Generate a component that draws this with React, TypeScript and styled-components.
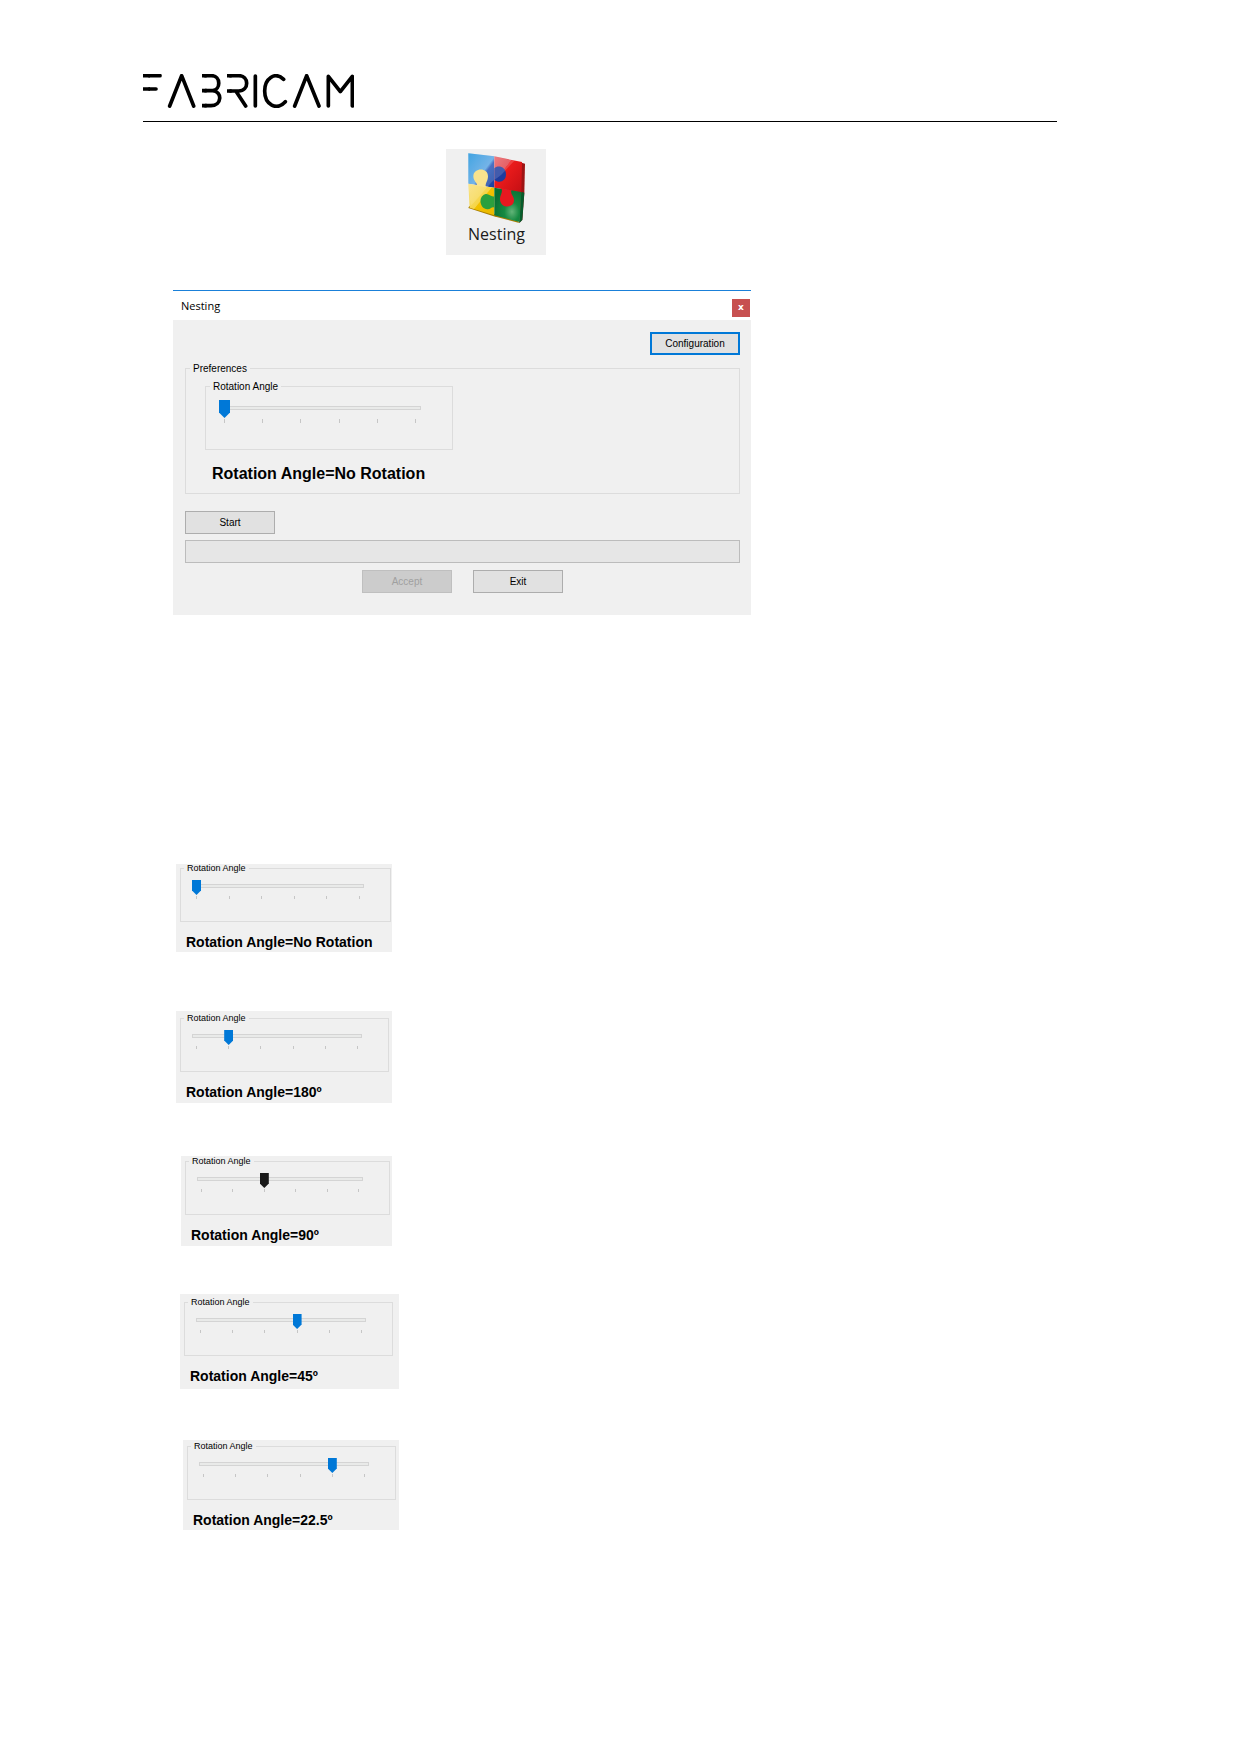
import React, { useId, useState } from "react";
import styled, { createGlobalStyle } from "styled-components";

const GlobalStyle = createGlobalStyle`
  *, *::before, *::after { box-sizing: border-box; }
  body { margin: 0; background: #fff; color: #000; font-family: "Liberation Sans", Arial, sans-serif; }
`;

const uiFont = `"Liberation Sans", Arial, sans-serif`;
const titleFont = `"Open Sans", "Noto Sans", sans-serif`;

const Page = styled.main`
  padding: 74px 183px 64px 143px;
`;

const Header = styled.header`
  display: flex;
  padding-bottom: 13px;
  border-bottom: 1px solid #000;
`;

const ToolButton = styled.button`
  display: flex;
  flex-direction: column;
  align-items: center;
  width: 100px;
  height: 106px;
  margin: 27px 0 0 303px;
  padding: 4px 0 0 1px;
  border: 0;
  background: #f0f0f0;
  color: #1a1a1a;
  font: 16px/22px ${titleFont};
`;

const Dialog = styled.section`
  max-width: 578px;
  margin: 35px 0 0 30px;
  border-top: 1px solid #1a80d9;
  background: #f0f0f0;
`;

const TitleBar = styled.div`
  display: flex;
  align-items: center;
  justify-content: space-between;
  height: 29px;
  padding: 0 1px 0 8px;
  background: #fff;
`;

const Title = styled.h1`
  margin: 0;
  font: 11px/16px ${titleFont};
`;

const CloseButton = styled.button`
  width: 18px;
  height: 18px;
  margin-top: 4px;
  padding: 0 0 2px;
  border: 0;
  background: #c75050;
  color: #fff;
  font: bold 9px/16px "DejaVu Sans", sans-serif;
`;

const DialogBody = styled.div`
  display: flex;
  flex-direction: column;
  padding: 12px 11px 22px 12px;
`;

const PushButton = styled.button<{ $focused?: boolean }>`
  width: 90px;
  height: 23px;
  padding: 0;
  border: ${(p) => (p.$focused ? "2px solid #0078d7" : "1px solid #adadad")};
  background: #e1e1e1;
  color: #000;
  font: 10px/16px ${uiFont};

  &:disabled {
    border-color: #bfbfbf;
    background: #ccc;
    color: #a0a0a0;
  }
`;

const ButtonRow = styled.div<{ $align: string; $before: number }>`
  display: flex;
  justify-content: ${(p) => p.$align};
  gap: 21px;
  margin-top: ${(p) => p.$before}px;
`;

const Progress = styled.progress`
  appearance: none;
  display: block;
  width: 100%;
  height: 23px;
  margin-top: 6px;
  border: 1px solid #bcbcbc;
  background: #e6e6e6;

  &::-webkit-progress-bar { background: #e6e6e6; }
  &::-webkit-progress-value { background: #06b025; }
`;

const Group = styled.fieldset<{ $width?: number; $before?: number }>`
  min-width: 0;
  width: ${(p) => (p.$width ? `${p.$width}px` : "auto")};
  max-width: 100%;
  margin: ${(p) => p.$before ?? 0}px 0 0;
  padding: 0;
  border: 1px solid #dcdcdc;
`;

const Legend = styled.legend<{ $small?: boolean }>`
  margin-left: ${(p) => (p.$small ? 3 : 4)}px;
  padding: 0 3px;
  font: ${(p) => (p.$small ? "9px/9px" : "10px/13px")} ${uiFont};
`;

const Preferences = styled.div`
  padding: 5px 19px 9px;
`;

const SliderArea = styled.div<{ $small?: boolean }>`
  padding: ${(p) => (p.$small ? "7px 26px 22px 11px" : "7px 31px 26px 13px")};
`;

const Range = styled.input<{ $small?: boolean; $color: string }>`
  appearance: none;
  display: block;
  width: 100%;
  height: ${(p) => (p.$small ? 15 : 18)}px;
  margin: 0;
  background:
    linear-gradient(#e9eae9, #e9eae9) center ${(p) => (p.$small ? 5 : 7)}px / calc(100% - 2px) 2px no-repeat,
    linear-gradient(#d4d4d4, #d4d4d4) 0 ${(p) => (p.$small ? 4 : 6)}px / 100% 4px no-repeat;

  &::-webkit-slider-runnable-track { height: 100%; }

  &::-webkit-slider-thumb {
    appearance: none;
    width: ${(p) => (p.$small ? 9 : 11)}px;
    height: 100%;
    border: 0;
    background: ${(p) => p.$color};
    clip-path: polygon(0 0, 100% 0, 100% 70%, 50% 100%, 0 70%);
  }
`;

const Ticks = styled.div<{ $small?: boolean }>`
  display: flex;
  justify-content: space-between;
  height: ${(p) => (p.$small ? 3 : 4)}px;
  margin: 1px ${(p) => (p.$small ? 4 : 5)}px 0;
`;

const Tick = styled.span`
  width: 1px;
  background: #c6c6c6;
`;

const Caption = styled.output<{ $small?: boolean }>`
  display: block;
  padding-left: ${(p) => (p.$small ? 6 : 7)}px;
  margin-top: ${(p) => (p.$small ? 12 : 14)}px;
  font-weight: bold;
  font-size: ${(p) => (p.$small ? 14 : 16)}px;
  line-height: ${(p) => (p.$small ? 16 : 20)}px;
  white-space: nowrap;
`;

const Examples = styled.div`
  padding-top: 249px;
`;

const Example = styled.section<{ $left: number; $before: number; $width: number; $height: number; $top: number }>`
  width: ${(p) => p.$width}px;
  max-width: 100%;
  min-height: ${(p) => p.$height}px;
  margin: ${(p) => p.$before}px 0 0 ${(p) => p.$left}px;
  padding: ${(p) => p.$top}px 0 0 4px;
  background: #f0f0f0;
`;

const angles = ["No Rotation", "180º", "90º", "45º", "22.5º", "11.25º"];

function AngleControl({ start, width, small, color = "#0078d7" }: {
  start: number; width: number; small?: boolean; color?: string;
}) {
  const id = useId();
  const [step, setStep] = useState(start);
  return (
    <>
      <Group $width={width}>
        <Legend $small={small}><label htmlFor={id}>Rotation Angle</label></Legend>
        <SliderArea $small={small}>
          <Range
            id={id}
            type="range"
            min={0}
            max={5}
            value={step}
            onChange={(e) => setStep(Number(e.target.value))}
            $small={small}
            $color={color}
          />
          <Ticks $small={small} aria-hidden="true">
            {angles.map((a) => <Tick key={a} />)}
          </Ticks>
        </SliderArea>
      </Group>
      <Caption htmlFor={id} $small={small}>Rotation Angle={angles[step]}</Caption>
    </>
  );
}

function Logo() {
  return (
    <svg width="211" height="34" viewBox="39 42 633 102" fill="none" stroke="#000" strokeWidth="11"
      strokeLinejoin="round" role="img" aria-label="Fabricam">
      <path d="M39 47H60M39 87H60M216 47H230M216 92H230M216 137H230M291 47H305M291 93H305" />
      <g strokeLinecap="round">
        <path d="M58 47H90M58 87H78" />
        <path d="M119 138L155 47L191 138" />
        <path d="M226 47H244C274 47 272 90 248 92H226M248 92C278 94 276 137 243 137H226" />
        <path d="M301 47H326C358 47 358 93 326 93H301M319 95L347 138" />
        <path d="M376 48V138" />
        <path d="M461 58C434 33 404 56 404 93C404 134 440 154 466 125" />
        <path d="M494 138L530 47L567 138" />
        <path d="M595 138V49L631 95L667 49V138" />
      </g>
    </svg>
  );
}

function PuzzleIcon() {
  return (
    <svg width="57" height="70" viewBox="86 38 171 210" aria-hidden="true">
      <defs>
        <linearGradient id="pzBlue" x1="0" y1="0" x2="1" y2="1">
          <stop offset="0" stopColor="#1f93dc" /><stop offset="0.55" stopColor="#5aa6e4" />
          <stop offset="0.62" stopColor="#2456b8" /><stop offset="1" stopColor="#1b3f9c" />
        </linearGradient>
        <linearGradient id="pzRed" x1="0" y1="0" x2="1" y2="1">
          <stop offset="0" stopColor="#e8646a" /><stop offset="0.35" stopColor="#e0444a" />
          <stop offset="0.36" stopColor="#ee1c1c" /><stop offset="1" stopColor="#c40f14" />
        </linearGradient>
        <linearGradient id="pzYellow" x1="0" y1="0" x2="1" y2="1">
          <stop offset="0" stopColor="#f8e07a" /><stop offset="0.5" stopColor="#f6d548" />
          <stop offset="0.52" stopColor="#f2c100" /><stop offset="1" stopColor="#e8b800" />
        </linearGradient>
        <radialGradient id="pzGreen" cx="0.65" cy="0.7" r="0.7">
          <stop offset="0" stopColor="#62b478" /><stop offset="0.4" stopColor="#168a42" />
          <stop offset="1" stopColor="#087034" />
        </radialGradient>
      </defs>
      <path d="M242 66L257 70L255 158L249 238L240 248Z" fill="#9e1414" />
      <path d="M246 154L255 157L249 239L240 248Z" fill="#075c2c" />
      <path d="M87 203L163 228L240 248L236 243L164 220L90 197Z" fill="#a67c00" />
      <path d="M87 39L165 48V142L87 130Z" fill="url(#pzBlue)" />
      <path d="M165 48L248 65L246 157L165 142Z" fill="url(#pzRed)" />
      <path d="M87 130L165 142V225L91 202Z" fill="url(#pzYellow)" />
      <path d="M165 142L246 155L241 245L165 225Z" fill="url(#pzGreen)" />
      <path d="M165 84C176 73 200 80 200 102C200 124 178 130 165 118Z" fill="#1e3c9e" />
      <path d="M112 136C116 128 102 124 102 108C102 82 146 80 146 108C146 124 136 130 140 141Z" fill="#f8de78" />
      <path d="M186 144C192 156 181 164 182 178C185 206 224 204 224 180C224 166 213 164 216 150Z" fill="#e81820" />
      <path d="M165 168C155 172 149 158 137 162C115 170 122 206 144 207C154 208 157 198 165 202Z" fill="#2ba03e" />
      <path d="M87 39L165 48L226 61C202 82 196 100 165 118C146 134 118 174 94 196L87 130Z" fill="#fff" opacity="0.16" />
    </svg>
  );
}

const examples = [
  { step: 0, left: 33, before: 0, width: 216, height: 88, top: 0, group: 211 },
  { step: 1, left: 33, before: 59, width: 216, height: 92, top: 3, group: 209 },
  { step: 2, left: 38, before: 53, width: 211, height: 90, top: 1, group: 205, color: "#1a1a1a" },
  { step: 3, left: 37, before: 48, width: 219, height: 95, top: 4, group: 209 },
  { step: 4, left: 40, before: 51, width: 216, height: 90, top: 2, group: 209 },
];

export default function App() {
  return (
    <>
      <GlobalStyle />
      <Page>
        <Header><Logo /></Header>
        <ToolButton type="button"><PuzzleIcon />Nesting</ToolButton>
        <Dialog aria-label="Nesting">
          <TitleBar>
            <Title>Nesting</Title>
            <CloseButton type="button" aria-label="Close">x</CloseButton>
          </TitleBar>
          <DialogBody>
            <ButtonRow $align="flex-end" $before={0}>
              <PushButton type="button" $focused>Configuration</PushButton>
            </ButtonRow>
            <Group $before={7}>
              <Legend>Preferences</Legend>
              <Preferences>
                <AngleControl start={0} width={248} />
              </Preferences>
            </Group>
            <ButtonRow $align="flex-start" $before={17}>
              <PushButton type="button">Start</PushButton>
            </ButtonRow>
            <Progress value={0} max={100} aria-label="Nesting progress" />
            <ButtonRow $align="center" $before={7}>
              <PushButton type="button" disabled>Accept</PushButton>
              <PushButton type="button">Exit</PushButton>
            </ButtonRow>
          </DialogBody>
        </Dialog>
        <Examples>
          {examples.map((e) => (
            <Example key={e.step} $left={e.left} $before={e.before} $width={e.width} $height={e.height} $top={e.top}>
              <AngleControl start={e.step} width={e.group} color={e.color} small />
            </Example>
          ))}
        </Examples>
      </Page>
    </>
  );
}
